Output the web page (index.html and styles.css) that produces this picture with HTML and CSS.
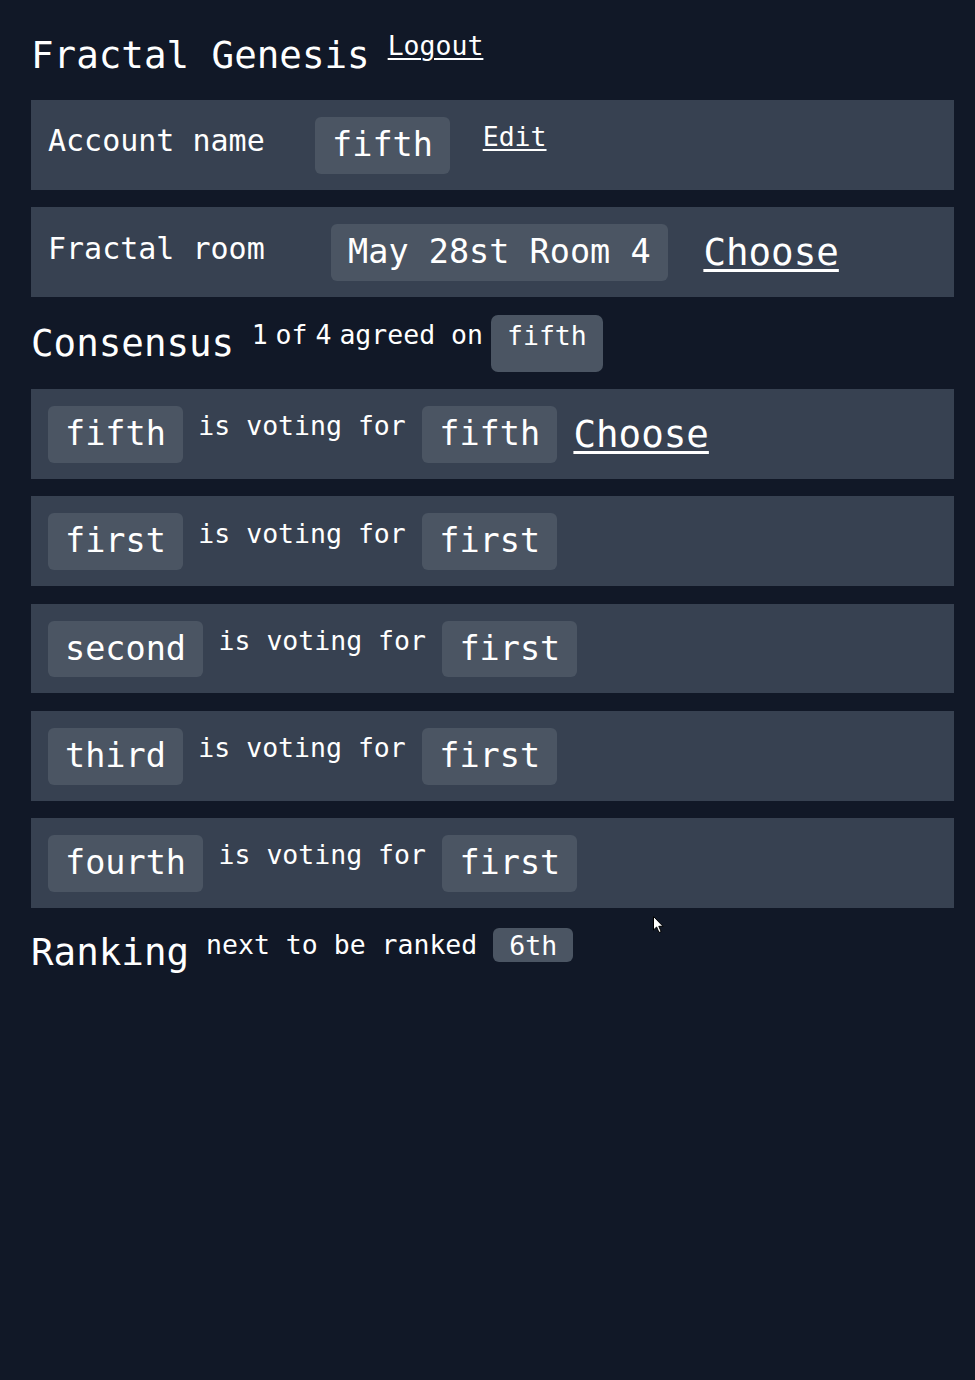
FILE: index.html
```html
<!DOCTYPE html>
<html lang="en">
<head>
<meta charset="utf-8">
<title>Fractal Genesis</title>
<link rel="stylesheet" href="styles.css">
</head>
<body>
<div class="page">
  <header class="top">
    <h1 class="title">Fractal Genesis</h1>
    <a class="link link-sm logout" href="#">Logout</a>
  </header>

  <section class="card">
    <span class="label">Account name</span>
    <span class="chip chip-lg chip-account">fifth</span>
    <a class="link link-sm edit" href="#">Edit</a>
  </section>

  <section class="card">
    <span class="label">Fractal room</span>
    <span class="chip chip-lg chip-room">May 28st Room 4</span>
    <a class="link link-lg room-choose" href="#">Choose</a>
  </section>

  <div class="section-head consensus">
    <h2 class="heading">Consensus</h2>
    <span class="note"><span class="tight">1 of 4 agreed</span> on</span>
    <span class="chip chip-sm">fifth</span>
  </div>

  <section class="card vote">
    <span class="chip chip-lg">fifth</span>
    <span class="vote-text">is voting for</span>
    <span class="chip chip-lg">fifth</span>
    <a class="link link-lg vote-choose" href="#">Choose</a>
  </section>

  <section class="card vote">
    <span class="chip chip-lg">first</span>
    <span class="vote-text">is voting for</span>
    <span class="chip chip-lg">first</span>
  </section>

  <section class="card vote">
    <span class="chip chip-lg">second</span>
    <span class="vote-text">is voting for</span>
    <span class="chip chip-lg">first</span>
  </section>

  <section class="card vote">
    <span class="chip chip-lg">third</span>
    <span class="vote-text">is voting for</span>
    <span class="chip chip-lg">first</span>
  </section>

  <section class="card vote">
    <span class="chip chip-lg">fourth</span>
    <span class="vote-text">is voting for</span>
    <span class="chip chip-lg">first</span>
  </section>

  <div class="section-head ranking">
    <h2 class="heading">Ranking</h2>
    <span class="note">next to be ranked</span>
    <span class="chip chip-xs">6th</span>
  </div>
</div>

<svg class="cursor" width="12" height="18" viewBox="0 0 12 18" aria-hidden="true">
  <path d="M0.5 0.5 L0.5 14 L3.6 11 L6 16.5 L8.2 15.6 L5.8 10.3 L10 10.3 Z" fill="#ffffff" stroke="#000000" stroke-width="1"/>
</svg>
</body>
</html>
```

FILE: styles.css
```css
html, body {
  margin: 0;
  padding: 0;
  background: #111827;
}

body {
  color: #ffffff;
  font-family: "DejaVu Sans Mono", "Liberation Mono", monospace;
  min-height: 1380px;
  position: relative;
}

.page {
  display: flex;
  flex-direction: column;
  gap: 17.5px;
  padding: 0 21px 0 31px;
}

/* header */
.top {
  display: flex;
  align-items: flex-start;
  height: 50px;
  margin-top: 32.5px;
}

.title {
  margin: 4px 0 0 0;
  font-size: 37.5px;
  line-height: 37.5px;
  font-weight: normal;
}

.link {
  color: #ffffff;
  text-decoration: underline;
  display: block;
}

.link-sm {
  font-size: 26.5px;
  line-height: 26.5px;
  text-decoration-thickness: 2px;
  text-underline-offset: 3px;
}

.link-lg {
  font-size: 37.5px;
  line-height: 37.5px;
  text-decoration-thickness: 2.5px;
  text-underline-offset: 4px;
}

.logout {
  margin-left: 18px;
}

/* cards */
.card {
  display: flex;
  align-items: flex-start;
  box-sizing: border-box;
  height: 89.75px;
  padding: 17px 17px 0 17px;
  background: #374151;
}

.label {
  font-size: 30px;
  line-height: 30px;
  margin-top: 9.3px;
}

.chip {
  display: block;
  background: #4b5563;
  white-space: pre;
}

.chip-lg {
  font-size: 33.5px;
  height: 56.75px;
  line-height: 56.75px;
  padding: 0 17px;
  border-radius: 6px;
}

.chip-account {
  margin-left: 50.3px;
}

.chip-room {
  margin-left: 66.3px;
}

.edit {
  margin-left: 32.8px;
  margin-top: 7.3px;
}

.room-choose {
  margin-left: 35.8px;
  margin-top: 9.75px;
}

/* vote rows */
.vote-text {
  font-size: 26.5px;
  line-height: 26.5px;
  margin: 7.3px 16.5px 0 15.5px;
  white-space: pre;
}

.vote-choose {
  margin-left: 16.3px;
  margin-top: 9.75px;
}

/* section heads */
.section-head {
  display: flex;
  align-items: flex-start;
}

.consensus {
  height: 57px;
}

.heading {
  margin: 0;
  font-size: 37.5px;
  line-height: 37.5px;
  font-weight: normal;
}

.consensus .heading {
  margin-top: 10.5px;
}

.note {
  font-size: 26.5px;
  line-height: 26.5px;
  white-space: pre;
}

.consensus .note {
  margin-top: 7.4px;
  margin-left: 17.5px;
}

.tight {
  word-spacing: -8px;
}

.chip-sm {
  font-size: 26.5px;
  box-sizing: border-box;
  height: 57px;
  line-height: 32px;
  padding: 5px 16px 0 16px;
  border-radius: 7px;
  margin-left: 8px;
}

.ranking .heading {
  margin-top: 9px;
}

.ranking .note {
  margin-top: 6.6px;
  margin-left: 17px;
}

.chip-xs {
  font-size: 26.5px;
  box-sizing: border-box;
  height: 33.4px;
  line-height: 32px;
  padding: 1.5px 16px 0 16px;
  border-radius: 6px;
  margin-top: 3px;
  margin-left: 16px;
}

/* mouse pointer overlay */
.cursor {
  position: absolute;
  left: 653px;
  top: 916px;
}
```
